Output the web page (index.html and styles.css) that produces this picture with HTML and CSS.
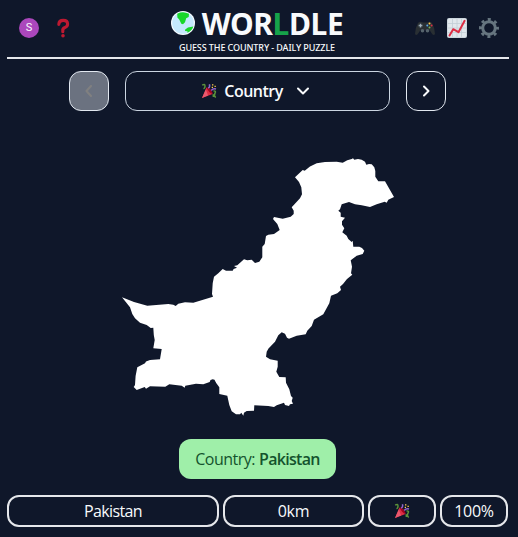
FILE: index.html
```html
<!DOCTYPE html>
<html lang="en">
<head>
<meta charset="utf-8">
<title>Worldle</title>
<link rel="stylesheet" href="styles.css">
</head>
<body>
<svg width="0" height="0" class="defs" aria-hidden="true">
  <symbol id="party" viewBox="0 0 16 16">
    <path d="M1 15 5.5 4.5Q9 6 11.5 11Z" fill="#dd2e44"/>
    <path d="M1 15 4.8 6.2 7 12.6Z" fill="#ea596e"/>
    <path d="M5.5 4.5Q8 4 10 7T11.5 11Q8 10 5.5 4.5" fill="#a0041e"/>
    <path d="M1.2 2.2Q4 .5 4 3T2.4 5.4M12.5 8Q15.5 7.5 14 10.2T14.8 14.5M12.2 11.2 12.4 14" fill="none" stroke="#5c913b" stroke-width="1.5"/>
    <path d="M7.2 5.2Q9.3 4 8.4 1.2M10.3 7.5Q12 5 15 6" fill="none" stroke="#9266cc" stroke-width="1.5"/>
    <path d="M11 1.2h1.4v1.4H11zM13.5 2.8h1.3v1.3h-1.3zM10.7 3.8H12v1.3h-1.3z" fill="#ffcc4d"/>
  </symbol>
</svg>
<div class="page">
  <header class="header">
    <div class="tools left">
      <span class="avatar">S</span>
      <svg class="icon" viewBox="0 0 20 20"><path d="M5.8 6.4Q6 2.4 10.3 2.4T14.6 6.1Q14.6 8.6 12 9.5T9.8 12.8V13.7" fill="none" stroke="#be1931" stroke-width="3.1" stroke-linecap="round"/><circle cx="10" cy="17.8" r="1.8" fill="#be1931"/></svg>
    </div>
    <div class="brand">
      <div class="title">
        <svg class="globe" viewBox="0 0 24 24"><circle cx="12" cy="12" r="12" fill="#f6fbff"/><circle cx="12" cy="12" r="10.8" fill="#c5e9fd"/><path d="M6.2 2.7Q12-.2 18 2.8L17.7 6.1 15.2 7.2 14 11.2 12 13.2 10.3 12.8 8.4 8.8 6.4 6.4Z" fill="#18d72a"/><path d="M14.2 18.6 17 16.4 22.4 15.6Q20.8 20 16.3 21.8L16.5 20.2 14 20Z" fill="#18d72a"/></svg>
        <h1>WOR<span class="accent">L</span>DLE</h1>
      </div>
      <p class="tagline">GUESS THE COUNTRY - DAILY PUZZLE</p>
    </div>
    <div class="tools right">
      <svg class="icon" viewBox="0 0 20 20"><path d="M3 5Q5 3 8 4.5H12Q15 3 17 5 20 10 20 16 18.5 18.5 16.5 15L14.5 12H5.5L3.5 15Q1.5 18.5 0 16 0 10 3 5Z" fill="#292f33"/><circle cx="5.5" cy="7.6" r="2.2" fill="#4f5b63"/><path d="M5.5 5.9v3.4M3.8 7.6h3.4" stroke="#aab8c2" stroke-width=".9"/><circle cx="7.5" cy="12.7" r="1.8" fill="#56636c"/><circle cx="12.5" cy="12.7" r="1.8" fill="#56636c"/><circle cx="14.5" cy="5.5" r="1" fill="#ffcc4d"/><circle cx="12.3" cy="7.5" r="1" fill="#55acee"/><circle cx="16.6" cy="7.5" r="1" fill="#dd2e44"/><circle cx="14.5" cy="9.6" r="1" fill="#77b255"/></svg>
      <svg class="icon" viewBox="0 0 20 20"><rect width="20" height="20" rx="2" fill="#ccd6dd"/><rect x="1" y="1" width="18" height="18" rx="1" fill="#e1e8ed"/><path d="M1 5.5h18M1 10h18M1 14.5h18M5.5 1v18M10 1v18M14.5 1v18" stroke="#c3ced6" stroke-width=".8"/><path d="M2.5 17.5 6.2 11.2 11.5 14.2 17.6 2.8" fill="none" stroke="#dd2e44" stroke-width="2" stroke-linecap="round" stroke-linejoin="round"/></svg>
      <svg class="icon" viewBox="0 0 20 20"><circle cx="10" cy="10" r="8.5" fill="none" stroke="#66757f" stroke-width="3" stroke-dasharray="3 3.676" stroke-dashoffset="1.5"/><circle cx="10" cy="10" r="6.3" fill="none" stroke="#66757f" stroke-width="3"/></svg>
    </div>
  </header>
  <nav class="rounds">
    <button class="step disabled" disabled><svg viewBox="0 0 12 12"><path d="M8 1 3.5 6 8 11"/></svg></button>
    <button class="select"><svg class="party"><use href="#party"/></svg><span>Country</span><svg class="chevron" viewBox="0 0 12 12"><path d="M1 3.5 6 8.5 11 3.5"/></svg></button>
    <button class="step"><svg viewBox="0 0 12 12"><path d="M4 1.5 8.5 6 4 10.5"/></svg></button>
  </nav>
  <main class="map">
    <svg viewBox="121 157 274 260" width="274" height="260"><path fill="#fff" d="M122 297.3 134 302 147.3 305.7 168.3 304 173.3 304.7 175.7 306 178.3 303.7 185 302.3 193.3 302.7 213 296.7 212 294 212.7 283.3 214 276.7 218.3 273.3 222.7 269 226 270.7 232.7 270.7 233.6 269 237 267.7 234 266 237.3 265.3 244 259.3 247.3 260.3 251.7 259.7 255 263 259.3 261.7 262.3 257.3V246.7L264.7 244 266 236 268.3 234.7 274 234 279.7 230 277.3 224 273 219 274 217 282.7 218.7 290.7 216.7 293.7 214V210.7L291.7 207.3 300 198.3 302 194.3 301.3 187.3 299 182 295 177.3 302.7 170 304.7 170.7 310 166.5 316.7 163.3 325 162 336.7 161.7 342.7 162.7 347.3 160.3 351.7 159 353 158.3 354.3 159.7 358 159.1 361.7 159.7 365 161.7 366.3 164.7 369 164 371.7 164.3 374.3 167.3 375.3 171 375.3 176.7 378.3 181.3H385L394 197 388.3 199.7 386.7 202.7 384.7 201.7 376.7 204.3 370 207 361.7 205.3 355 204.3 349 202 341.7 204.3 340 209.3 338.3 210.7 340.7 212.7V216.7L345 217.7 342 221.3V224.7L344.3 228.3 342.3 232.3 346.7 235.7 348.3 239 351.7 242 352.7 240.7 353.3 246.7 359.3 246.7 362 248 364.3 250.7 362.7 254 356.7 255.7 350.7 260.3 352 266.7 351 273.3 352.3 274.7 347 279 343 284 340 286.7 341 290 337.3 293.3 331 295.7 329.3 303.3 323.3 314.3 314 319.7 311.7 326 307.3 330.7 305.7 334.3 296.7 335.7 289 338.7 287 337.7 285 333.7 281.7 332.3 278.3 335.3 275 341.7 268.5 348.5 266.7 351.7 266 356.7 270 359.3 277.7 360.7V366.7L276.3 371.7 279.3 377 285.7 377.3 286 382.7 289.3 389.3 291 396 292.7 397.7 291.7 401 293 403.7 290 404.3 289 406 285 405 284 402.7 276.7 405.3 274 407 268.3 406 254.3 405.3 254 410.7 246.7 411 244 412.7 243.3 415.7 241.3 412.7 240 414.3 236 414.3 231.7 411.3 229.3 405 227.3 395.7 219.3 394V387.3L216 382.7 214.5 379.8 212.7 379.3 210.5 380 209.7 382 203.3 384.3 196 383.7 185.3 385.7 184.7 387.7 181.7 385.7 169.3 384.3 165.3 386.7 150 386.3 146 388.7 144.7 387 136.7 390 133.7 387 135 385 135.6 376 137.3 367.3 145 363.3 146 361.5 150 360 160 359.3 161.7 349 153.3 348.3 154.7 340 153.8 335 153.3 327.7 150.7 328 146.7 325 140 322.7 135 318.3 132.3 314 130 307.3Z"/><path d="M210.5 382Q213 379.5 215.5 382.5" fill="none" stroke="#0f172a" stroke-width=".9"/></svg>
  </main>
  <div class="answer"><span>Country:</span><strong>Pakistan</strong></div>
  <section class="guess">
    <div class="cell name">Pakistan</div>
    <div class="cell">0km</div>
    <div class="cell"><svg class="party"><use href="#party"/></svg></div>
    <div class="cell">100%</div>
  </section>
</div>
</body>
</html>
```
FILE: styles.css
```css
* { box-sizing: border-box; margin: 0; padding: 0; }
body { background: #0f172a; color: #f8fafc; font: 16px/24px "Open Sans", "Noto Sans", sans-serif; }
.defs { position: absolute; }
.page { width: 518px; height: 537px; display: flex; flex-direction: column; padding: 0 9px 10px 7px; overflow: hidden; }
.header { height: 59px; border-bottom: 2px solid #e5e7eb; display: grid; grid-template-columns: 96px 1fr 96px; }
.tools { display: flex; align-items: center; height: 56px; }
.left { padding-left: 12px; gap: 14px; }
.right { justify-content: flex-end; gap: 12px; padding-right: 10px; }
.icon { width: 20px; height: 20px; flex: none; }
.avatar { width: 20px; height: 20px; border-radius: 50%; background: #ab47bc; font: 11px/20px Roboto, sans-serif; text-align: center; }
.brand { display: flex; flex-direction: column; align-items: center; padding: 6px 2px 0 0; }
.title { display: flex; align-items: center; gap: 7px; height: 35px; }
.globe { width: 24px; height: 24px; margin-bottom: 2px; }
h1 { font: 700 30px/30px "Noto Sans", sans-serif; letter-spacing: -.4px; padding-top: 1px; }
.accent { color: #16a34a; }
.tagline { font: 500 9px/12px "Noto Sans", sans-serif; letter-spacing: -.1px; white-space: nowrap; padding-top: 1px; }
.rounds { display: flex; justify-content: center; gap: 16px; padding: 12px 2px 0 0; }
button { height: 40px; border: 1px solid #e2e8f0; border-radius: 12px; background: transparent; color: inherit; font: inherit; font-weight: 600; display: flex; align-items: center; justify-content: center; }
.step { width: 40px; }
.step svg, .chevron { width: 12px; height: 12px; fill: none; stroke: currentColor; stroke-width: 2; stroke-linecap: round; stroke-linejoin: round; }
.disabled { background: #6b7280; color: #808080; }
.select { width: 265px; border-color: #cbd5e1; padding-right: 4px; }
.select span { width: 59px; margin: 0 14px 0 7px; letter-spacing: -.5px; white-space: nowrap; }
.party { width: 16px; height: 16px; }
.map { height: 260px; margin: 46px 0 22px; padding-left: 114px; }
.map svg { display: block; }
.answer { align-self: center; width: 157px; height: 40px; border-radius: 12px; background: #9fefa9; color: #14532d; display: flex; align-items: center; justify-content: center; gap: 4px; margin-right: 1px; letter-spacing: -.5px; }
.answer strong { font-weight: 600; letter-spacing: -.7px; }
.guess { margin-top: 16px; display: grid; grid-template-columns: 212px 141px 68px 68px; gap: 4px; }
.cell { height: 32px; border: 2px solid #e5e7eb; border-radius: 12px; display: flex; align-items: center; justify-content: center; letter-spacing: -.3px; }
.name { letter-spacing: -.6px; }
```
